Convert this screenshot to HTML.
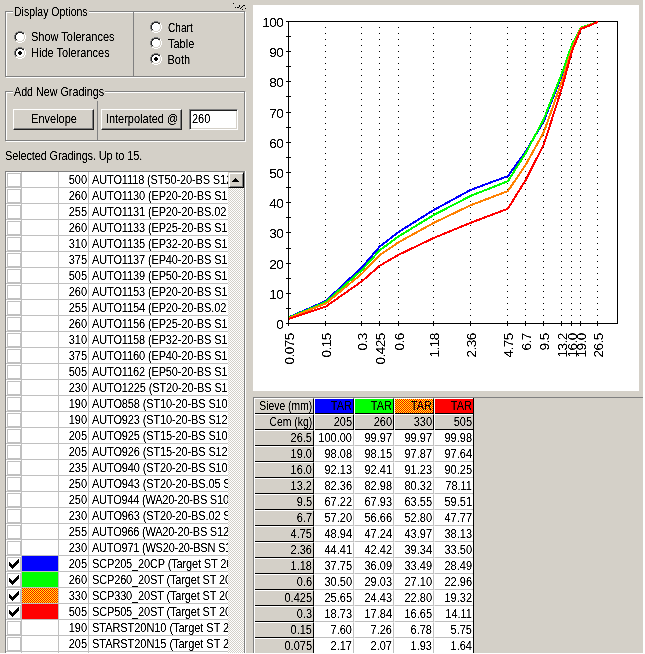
<!DOCTYPE html>
<html lang="en"><head><meta charset="utf-8"><title>Gradings</title>
<style>
*{box-sizing:border-box}
html,body{margin:0;padding:0}
body{width:645px;height:654px;overflow:hidden;background:#d4d0c8;position:relative;
 font-family:"Liberation Sans",sans-serif;font-size:11px;color:#000}
.abs,.t,.gb,.btn,.rad,.ln{position:absolute}
.t{height:14px;line-height:14px;white-space:nowrap;font-size:11px;filter:url(#crisp)}
.t span{display:inline-block;transform:scaleY(1.125);transform-origin:0 11px;line-height:14px;height:14px;vertical-align:top}
.gbw{position:absolute;border:1px solid #fff}
.gbg{position:absolute;border:1px solid #808080}
.lg{position:absolute;background:#d4d0c8;height:14px}
.rad{width:12px;height:12px;border-radius:50%;background:#fff;
 border:1px solid;border-color:#808080 #fff #fff #808080;transform:rotate(0deg)}
.rad:before{content:"";position:absolute;left:0;top:0;width:10px;height:10px;border-radius:50%;
 border:1px solid;border-color:#404040 #d4d0c8 #d4d0c8 #404040}
.rad.on:after{content:"";position:absolute;left:3px;top:3px;width:4px;height:4px;border-radius:50%;background:#000}
.btn{background:#d4d0c8;border:1px solid;border-color:#fff #202020 #202020 #fff;
 box-shadow:inset -1px -1px 0 #808080}
.inp{position:absolute;background:#fff;border:1px solid;border-color:#808080 #fff #fff #808080;
 box-shadow:inset 1px 1px 0 #202020, inset -1px -1px 0 #d4d0c8}
.ln{background:#808080}
#list{position:absolute;left:6px;top:172px;width:222px;height:481px;background:#fff;overflow:hidden}
.row{position:absolute;left:0;width:222px;height:16px;border-bottom:1px solid #c0c0c0}
.row i{position:absolute;left:1px;top:1px;width:14px;height:14px;border:1px solid #c0c0c0}
.row b{position:absolute;left:16px;top:0;width:36px;height:15px;font-weight:normal}
.vl{position:absolute;top:0;width:1px;height:481px;background:#c0c0c0}
.row .t{font-size:11px}
#sb{position:absolute;left:228px;top:172px;width:16px;height:481px;
 background:conic-gradient(#fff 25%,#d4d0c8 0 50%,#fff 0 75%,#d4d0c8 0) 0 0/2px 2px}
#sbu{position:absolute;left:0;top:0;width:16px;height:16px;background:#d4d0c8;
 border:1px solid;border-color:#d4d0c8 #000 #000 #d4d0c8;box-shadow:inset 1px 1px 0 #fff, inset -1px -1px 0 #808080}
#grid{position:absolute;left:254px;top:398px}
.c{position:absolute;height:16px}
.fx{background:#d4d0c8;border:1px solid;border-color:#fff #000 #000 #fff}
.dc{background:#fff;border:1px solid;border-color:#fff #c0c0c0 #c0c0c0 #fff}
.dith{background:conic-gradient(#ff0 25%,#f00 0 50%,#ff0 0 75%,#f00 0) 0 0/2px 2px}
svg{position:absolute;display:block}
</style></head><body>
<svg width="0" height="0" style="left:0;top:0"><defs><filter id="crisp" x="-5%" y="-20%" width="110%" height="140%" color-interpolation-filters="sRGB"><feComponentTransfer><feFuncA type="linear" slope="2.2" intercept="-0.5"/></feComponentTransfer></filter><filter id="crispc" filterUnits="userSpaceOnUse" x="253" y="5" width="386" height="386" color-interpolation-filters="sRGB"><feComponentTransfer><feFuncA type="linear" slope="2.2" intercept="-0.5"/></feComponentTransfer></filter></defs></svg>
<div class="gbw" style="left:6px;top:12px;width:240px;height:66px"></div>
<div class="gbg" style="left:5px;top:11px;width:240px;height:66px"></div>
<div class="ln" style="left:133px;top:11px;width:1px;height:66px"></div>
<div class="lg" style="left:13px;top:5px;width:76px"></div>
<div class="t" style="left:14px;top:5px;"><span style="transform:scale(0.955,1.125);transform-origin:0 11px">Display Options</span></div>
<svg style="left:14px;top:31px" width="12" height="12" viewBox="0 0 12 12" shape-rendering="crispEdges"><path fill="#808080" d="M4 0h4v1h-4zM2 1h2v1h-2zM8 1h2v1h-2zM1 2h1v1h-1zM1 3h1v1h-1zM0 4h1v1h-1zM0 5h1v1h-1zM0 6h1v1h-1zM0 7h1v1h-1zM1 8h1v1h-1zM1 9h1v1h-1z"/><path fill="#202020" d="M4 1h4v1h-4zM2 2h2v1h-2zM8 2h2v1h-2zM2 3h1v1h-1zM1 4h1v1h-1zM1 5h1v1h-1zM1 6h1v1h-1zM1 7h1v1h-1zM2 8h1v1h-1z"/><path fill="#ffffff" d="M4 2h4v1h-4zM3 3h6v1h-6zM2 4h8v1h-8zM2 5h8v1h-8zM2 6h8v1h-8zM2 7h8v1h-8zM3 8h6v1h-6zM4 9h4v1h-4z"/><path fill="#ffffff" d="M10 2h1v1h-1zM10 3h1v1h-1zM11 4h1v1h-1zM11 5h1v1h-1zM11 6h1v1h-1zM11 7h1v1h-1zM10 8h1v1h-1zM10 9h1v1h-1zM2 10h2v1h-2zM8 10h2v1h-2zM4 11h4v1h-4z"/><path fill="#d4d0c8" d="M9 3h1v1h-1zM10 4h1v1h-1zM10 5h1v1h-1zM10 6h1v1h-1zM10 7h1v1h-1zM9 8h1v1h-1zM2 9h2v1h-2zM8 9h2v1h-2zM4 10h4v1h-4z"/></svg>
<div class="t" style="left:31px;top:30px;"><span>Show Tolerances</span></div>
<svg style="left:14px;top:47px" width="12" height="12" viewBox="0 0 12 12" shape-rendering="crispEdges"><path fill="#808080" d="M4 0h4v1h-4zM2 1h2v1h-2zM8 1h2v1h-2zM1 2h1v1h-1zM1 3h1v1h-1zM0 4h1v1h-1zM0 5h1v1h-1zM0 6h1v1h-1zM0 7h1v1h-1zM1 8h1v1h-1zM1 9h1v1h-1z"/><path fill="#202020" d="M4 1h4v1h-4zM2 2h2v1h-2zM8 2h2v1h-2zM2 3h1v1h-1zM1 4h1v1h-1zM1 5h1v1h-1zM1 6h1v1h-1zM1 7h1v1h-1zM2 8h1v1h-1z"/><path fill="#ffffff" d="M4 2h4v1h-4zM3 3h6v1h-6zM2 4h3v1h-3zM7 4h3v1h-3zM2 5h2v1h-2zM8 5h2v1h-2zM2 6h2v1h-2zM8 6h2v1h-2zM2 7h3v1h-3zM7 7h3v1h-3zM3 8h6v1h-6zM4 9h4v1h-4z"/><path fill="#ffffff" d="M10 2h1v1h-1zM10 3h1v1h-1zM11 4h1v1h-1zM11 5h1v1h-1zM11 6h1v1h-1zM11 7h1v1h-1zM10 8h1v1h-1zM10 9h1v1h-1zM2 10h2v1h-2zM8 10h2v1h-2zM4 11h4v1h-4z"/><path fill="#d4d0c8" d="M9 3h1v1h-1zM10 4h1v1h-1zM10 5h1v1h-1zM10 6h1v1h-1zM10 7h1v1h-1zM9 8h1v1h-1zM2 9h2v1h-2zM8 9h2v1h-2zM4 10h4v1h-4z"/><path fill="#000000" d="M5 4h2v1h-2zM4 5h4v1h-4zM4 6h4v1h-4zM5 7h2v1h-2z"/></svg>
<div class="t" style="left:31px;top:46px;"><span>Hide Tolerances</span></div>
<svg style="left:150px;top:21px" width="12" height="12" viewBox="0 0 12 12" shape-rendering="crispEdges"><path fill="#808080" d="M4 0h4v1h-4zM2 1h2v1h-2zM8 1h2v1h-2zM1 2h1v1h-1zM1 3h1v1h-1zM0 4h1v1h-1zM0 5h1v1h-1zM0 6h1v1h-1zM0 7h1v1h-1zM1 8h1v1h-1zM1 9h1v1h-1z"/><path fill="#202020" d="M4 1h4v1h-4zM2 2h2v1h-2zM8 2h2v1h-2zM2 3h1v1h-1zM1 4h1v1h-1zM1 5h1v1h-1zM1 6h1v1h-1zM1 7h1v1h-1zM2 8h1v1h-1z"/><path fill="#ffffff" d="M4 2h4v1h-4zM3 3h6v1h-6zM2 4h8v1h-8zM2 5h8v1h-8zM2 6h8v1h-8zM2 7h8v1h-8zM3 8h6v1h-6zM4 9h4v1h-4z"/><path fill="#ffffff" d="M10 2h1v1h-1zM10 3h1v1h-1zM11 4h1v1h-1zM11 5h1v1h-1zM11 6h1v1h-1zM11 7h1v1h-1zM10 8h1v1h-1zM10 9h1v1h-1zM2 10h2v1h-2zM8 10h2v1h-2zM4 11h4v1h-4z"/><path fill="#d4d0c8" d="M9 3h1v1h-1zM10 4h1v1h-1zM10 5h1v1h-1zM10 6h1v1h-1zM10 7h1v1h-1zM9 8h1v1h-1zM2 9h2v1h-2zM8 9h2v1h-2zM4 10h4v1h-4z"/></svg>
<div class="t" style="left:167.5px;top:21px;"><span style="transform:scale(0.92,1.125);transform-origin:0 11px">Chart</span></div>
<svg style="left:150px;top:37px" width="12" height="12" viewBox="0 0 12 12" shape-rendering="crispEdges"><path fill="#808080" d="M4 0h4v1h-4zM2 1h2v1h-2zM8 1h2v1h-2zM1 2h1v1h-1zM1 3h1v1h-1zM0 4h1v1h-1zM0 5h1v1h-1zM0 6h1v1h-1zM0 7h1v1h-1zM1 8h1v1h-1zM1 9h1v1h-1z"/><path fill="#202020" d="M4 1h4v1h-4zM2 2h2v1h-2zM8 2h2v1h-2zM2 3h1v1h-1zM1 4h1v1h-1zM1 5h1v1h-1zM1 6h1v1h-1zM1 7h1v1h-1zM2 8h1v1h-1z"/><path fill="#ffffff" d="M4 2h4v1h-4zM3 3h6v1h-6zM2 4h8v1h-8zM2 5h8v1h-8zM2 6h8v1h-8zM2 7h8v1h-8zM3 8h6v1h-6zM4 9h4v1h-4z"/><path fill="#ffffff" d="M10 2h1v1h-1zM10 3h1v1h-1zM11 4h1v1h-1zM11 5h1v1h-1zM11 6h1v1h-1zM11 7h1v1h-1zM10 8h1v1h-1zM10 9h1v1h-1zM2 10h2v1h-2zM8 10h2v1h-2zM4 11h4v1h-4z"/><path fill="#d4d0c8" d="M9 3h1v1h-1zM10 4h1v1h-1zM10 5h1v1h-1zM10 6h1v1h-1zM10 7h1v1h-1zM9 8h1v1h-1zM2 9h2v1h-2zM8 9h2v1h-2zM4 10h4v1h-4z"/></svg>
<div class="t" style="left:168px;top:37px;"><span>Table</span></div>
<svg style="left:150px;top:53px" width="12" height="12" viewBox="0 0 12 12" shape-rendering="crispEdges"><path fill="#808080" d="M4 0h4v1h-4zM2 1h2v1h-2zM8 1h2v1h-2zM1 2h1v1h-1zM1 3h1v1h-1zM0 4h1v1h-1zM0 5h1v1h-1zM0 6h1v1h-1zM0 7h1v1h-1zM1 8h1v1h-1zM1 9h1v1h-1z"/><path fill="#202020" d="M4 1h4v1h-4zM2 2h2v1h-2zM8 2h2v1h-2zM2 3h1v1h-1zM1 4h1v1h-1zM1 5h1v1h-1zM1 6h1v1h-1zM1 7h1v1h-1zM2 8h1v1h-1z"/><path fill="#ffffff" d="M4 2h4v1h-4zM3 3h6v1h-6zM2 4h3v1h-3zM7 4h3v1h-3zM2 5h2v1h-2zM8 5h2v1h-2zM2 6h2v1h-2zM8 6h2v1h-2zM2 7h3v1h-3zM7 7h3v1h-3zM3 8h6v1h-6zM4 9h4v1h-4z"/><path fill="#ffffff" d="M10 2h1v1h-1zM10 3h1v1h-1zM11 4h1v1h-1zM11 5h1v1h-1zM11 6h1v1h-1zM11 7h1v1h-1zM10 8h1v1h-1zM10 9h1v1h-1zM2 10h2v1h-2zM8 10h2v1h-2zM4 11h4v1h-4z"/><path fill="#d4d0c8" d="M9 3h1v1h-1zM10 4h1v1h-1zM10 5h1v1h-1zM10 6h1v1h-1zM10 7h1v1h-1zM9 8h1v1h-1zM2 9h2v1h-2zM8 9h2v1h-2zM4 10h4v1h-4z"/><path fill="#000000" d="M5 4h2v1h-2zM4 5h4v1h-4zM4 6h4v1h-4zM5 7h2v1h-2z"/></svg>
<div class="t" style="left:167.5px;top:53px;"><span>Both</span></div>
<svg style="left:232px;top:2px" width="16" height="9" viewBox="232 2 16 9" shape-rendering="crispEdges"><path fill="#000" d="M233 3h1v1h-1zM235 7h1v1h-1zM237 7h2v1h-2zM239 5h1v2h-1zM240 8h1v1h-1zM241 7h1v1h-1zM242 6h1v1h-1zM243 5h2v1h-2zM242 9h1v1h-1zM245 8h1v1h-1z"/></svg>
<div class="gbw" style="left:6px;top:92px;width:240px;height:50px"></div>
<div class="gbg" style="left:5px;top:91px;width:240px;height:50px"></div>
<div class="ln" style="left:97px;top:101px;width:1px;height:40px"></div>
<div class="lg" style="left:13px;top:85px;width:92px"></div>
<div class="t" style="left:14px;top:85px;"><span style="transform:scale(0.975,1.125);transform-origin:0 11px">Add New Gradings</span></div>
<div class="btn" style="left:13px;top:109px;width:81px;height:21px"></div>
<div class="t" style="left:13.5px;top:112px;width:81px;text-align:center;"><span>Envelope</span></div>
<div class="btn" style="left:101px;top:109px;width:81px;height:21px"></div>
<div class="t" style="left:101.5px;top:112px;width:81px;text-align:center;"><span>Interpolated @</span></div>
<div class="inp" style="left:189px;top:109px;width:49px;height:21px"></div>
<div class="t" style="left:192px;top:112px;"><span>260</span></div>
<div class="t" style="left:5px;top:149px;letter-spacing:-0.15px;"><span>Selected Gradings. Up to 15.</span></div>
<div class="ln" style="left:5px;top:171px;width:240px;height:1px"></div>
<div class="ln" style="left:5px;top:171px;width:1px;height:482px"></div>
<div class="ln" style="left:244px;top:171px;width:1px;height:482px"></div>
<div class="abs" style="left:245px;top:171px;width:1px;height:482px;background:#fff"></div>
<div id="list">
<div class="row" style="top:0px"><i></i>
<div class="t" style="left:53px;top:1px;width:28px;text-align:right;"><span>500</span></div>
<div class="t" style="left:86px;top:1px;letter-spacing:-0.13px;"><span>AUTO1118 (ST50-20-BS S12-</span></div>
</div>
<div class="row" style="top:16px"><i></i>
<div class="t" style="left:53px;top:1px;width:28px;text-align:right;"><span>260</span></div>
<div class="t" style="left:86px;top:1px;letter-spacing:-0.13px;"><span>AUTO1130 (EP20-20-BS S10-</span></div>
</div>
<div class="row" style="top:32px"><i></i>
<div class="t" style="left:53px;top:1px;width:28px;text-align:right;"><span>255</span></div>
<div class="t" style="left:86px;top:1px;letter-spacing:-0.13px;"><span>AUTO1131 (EP20-20-BS.02 S</span></div>
</div>
<div class="row" style="top:48px"><i></i>
<div class="t" style="left:53px;top:1px;width:28px;text-align:right;"><span>260</span></div>
<div class="t" style="left:86px;top:1px;letter-spacing:-0.13px;"><span>AUTO1133 (EP25-20-BS S10-</span></div>
</div>
<div class="row" style="top:64px"><i></i>
<div class="t" style="left:53px;top:1px;width:28px;text-align:right;"><span>310</span></div>
<div class="t" style="left:86px;top:1px;letter-spacing:-0.13px;"><span>AUTO1135 (EP32-20-BS S10-</span></div>
</div>
<div class="row" style="top:80px"><i></i>
<div class="t" style="left:53px;top:1px;width:28px;text-align:right;"><span>375</span></div>
<div class="t" style="left:86px;top:1px;letter-spacing:-0.13px;"><span>AUTO1137 (EP40-20-BS S10-</span></div>
</div>
<div class="row" style="top:96px"><i></i>
<div class="t" style="left:53px;top:1px;width:28px;text-align:right;"><span>505</span></div>
<div class="t" style="left:86px;top:1px;letter-spacing:-0.13px;"><span>AUTO1139 (EP50-20-BS S10-</span></div>
</div>
<div class="row" style="top:112px"><i></i>
<div class="t" style="left:53px;top:1px;width:28px;text-align:right;"><span>260</span></div>
<div class="t" style="left:86px;top:1px;letter-spacing:-0.13px;"><span>AUTO1153 (EP20-20-BS S12-</span></div>
</div>
<div class="row" style="top:128px"><i></i>
<div class="t" style="left:53px;top:1px;width:28px;text-align:right;"><span>255</span></div>
<div class="t" style="left:86px;top:1px;letter-spacing:-0.13px;"><span>AUTO1154 (EP20-20-BS.02 S</span></div>
</div>
<div class="row" style="top:144px"><i></i>
<div class="t" style="left:53px;top:1px;width:28px;text-align:right;"><span>260</span></div>
<div class="t" style="left:86px;top:1px;letter-spacing:-0.13px;"><span>AUTO1156 (EP25-20-BS S12-</span></div>
</div>
<div class="row" style="top:160px"><i></i>
<div class="t" style="left:53px;top:1px;width:28px;text-align:right;"><span>310</span></div>
<div class="t" style="left:86px;top:1px;letter-spacing:-0.13px;"><span>AUTO1158 (EP32-20-BS S12-</span></div>
</div>
<div class="row" style="top:176px"><i></i>
<div class="t" style="left:53px;top:1px;width:28px;text-align:right;"><span>375</span></div>
<div class="t" style="left:86px;top:1px;letter-spacing:-0.13px;"><span>AUTO1160 (EP40-20-BS S12-</span></div>
</div>
<div class="row" style="top:192px"><i></i>
<div class="t" style="left:53px;top:1px;width:28px;text-align:right;"><span>505</span></div>
<div class="t" style="left:86px;top:1px;letter-spacing:-0.13px;"><span>AUTO1162 (EP50-20-BS S12-</span></div>
</div>
<div class="row" style="top:208px"><i></i>
<div class="t" style="left:53px;top:1px;width:28px;text-align:right;"><span>230</span></div>
<div class="t" style="left:86px;top:1px;letter-spacing:-0.13px;"><span>AUTO1225 (ST20-20-BS S12-</span></div>
</div>
<div class="row" style="top:224px"><i></i>
<div class="t" style="left:53px;top:1px;width:28px;text-align:right;"><span>190</span></div>
<div class="t" style="left:86px;top:1px;letter-spacing:-0.13px;"><span>AUTO858 (ST10-20-BS S10-</span></div>
</div>
<div class="row" style="top:240px"><i></i>
<div class="t" style="left:53px;top:1px;width:28px;text-align:right;"><span>190</span></div>
<div class="t" style="left:86px;top:1px;letter-spacing:-0.13px;"><span>AUTO923 (ST10-20-BS S12-</span></div>
</div>
<div class="row" style="top:256px"><i></i>
<div class="t" style="left:53px;top:1px;width:28px;text-align:right;"><span>205</span></div>
<div class="t" style="left:86px;top:1px;letter-spacing:-0.13px;"><span>AUTO925 (ST15-20-BS S10-</span></div>
</div>
<div class="row" style="top:272px"><i></i>
<div class="t" style="left:53px;top:1px;width:28px;text-align:right;"><span>205</span></div>
<div class="t" style="left:86px;top:1px;letter-spacing:-0.13px;"><span>AUTO926 (ST15-20-BS S12-</span></div>
</div>
<div class="row" style="top:288px"><i></i>
<div class="t" style="left:53px;top:1px;width:28px;text-align:right;"><span>235</span></div>
<div class="t" style="left:86px;top:1px;letter-spacing:-0.13px;"><span>AUTO940 (ST20-20-BS S10-</span></div>
</div>
<div class="row" style="top:304px"><i></i>
<div class="t" style="left:53px;top:1px;width:28px;text-align:right;"><span>250</span></div>
<div class="t" style="left:86px;top:1px;letter-spacing:-0.13px;"><span>AUTO943 (ST20-20-BS.05 S</span></div>
</div>
<div class="row" style="top:320px"><i></i>
<div class="t" style="left:53px;top:1px;width:28px;text-align:right;"><span>250</span></div>
<div class="t" style="left:86px;top:1px;letter-spacing:-0.22px;"><span>AUTO944 (WA20-20-BS S10</span></div>
</div>
<div class="row" style="top:336px"><i></i>
<div class="t" style="left:53px;top:1px;width:28px;text-align:right;"><span>230</span></div>
<div class="t" style="left:86px;top:1px;letter-spacing:-0.13px;"><span>AUTO963 (ST20-20-BS.02 S</span></div>
</div>
<div class="row" style="top:352px"><i></i>
<div class="t" style="left:53px;top:1px;width:28px;text-align:right;"><span>255</span></div>
<div class="t" style="left:86px;top:1px;letter-spacing:-0.22px;"><span>AUTO966 (WA20-20-BS S12</span></div>
</div>
<div class="row" style="top:368px"><i></i>
<div class="t" style="left:53px;top:1px;width:28px;text-align:right;"><span>230</span></div>
<div class="t" style="left:86px;top:1px;letter-spacing:-0.22px;"><span>AUTO971 (WS20-20-BSN S1</span></div>
</div>
<div class="row" style="top:384px"><i></i>
<b style="background:#00f"></b>
<svg style="left:3px;top:3px" width="10" height="10" viewBox="0 0 10 10" shape-rendering="crispEdges"><path fill="#000" d="M9 0h1v1h-1zM8 1h2v1h-2zM7 2h3v1h-3zM0 3h1v1h-1zM6 3h4v1h-4zM0 4h2v1h-2zM5 4h4v1h-4zM0 5h3v1h-3zM4 5h4v1h-4zM0 6h7v1h-7zM1 7h5v1h-5zM2 8h3v1h-3zM3 9h1v1h-1z"/></svg>
<div class="t" style="left:53px;top:1px;width:28px;text-align:right;"><span>205</span></div>
<div class="t" style="left:86px;top:1px;letter-spacing:-0.15px;"><span>SCP205_20CP (Target ST 20</span></div>
</div>
<div class="row" style="top:400px"><i></i>
<b style="background:#0f0"></b>
<svg style="left:3px;top:3px" width="10" height="10" viewBox="0 0 10 10" shape-rendering="crispEdges"><path fill="#000" d="M9 0h1v1h-1zM8 1h2v1h-2zM7 2h3v1h-3zM0 3h1v1h-1zM6 3h4v1h-4zM0 4h2v1h-2zM5 4h4v1h-4zM0 5h3v1h-3zM4 5h4v1h-4zM0 6h7v1h-7zM1 7h5v1h-5zM2 8h3v1h-3zM3 9h1v1h-1z"/></svg>
<div class="t" style="left:53px;top:1px;width:28px;text-align:right;"><span>260</span></div>
<div class="t" style="left:86px;top:1px;letter-spacing:-0.15px;"><span>SCP260_20ST (Target ST 20</span></div>
</div>
<div class="row" style="top:416px"><i></i>
<b class="dith" style=""></b>
<svg style="left:3px;top:3px" width="10" height="10" viewBox="0 0 10 10" shape-rendering="crispEdges"><path fill="#000" d="M9 0h1v1h-1zM8 1h2v1h-2zM7 2h3v1h-3zM0 3h1v1h-1zM6 3h4v1h-4zM0 4h2v1h-2zM5 4h4v1h-4zM0 5h3v1h-3zM4 5h4v1h-4zM0 6h7v1h-7zM1 7h5v1h-5zM2 8h3v1h-3zM3 9h1v1h-1z"/></svg>
<div class="t" style="left:53px;top:1px;width:28px;text-align:right;"><span>330</span></div>
<div class="t" style="left:86px;top:1px;letter-spacing:-0.15px;"><span>SCP330_20ST (Target ST 20</span></div>
</div>
<div class="row" style="top:432px"><i></i>
<b style="background:#f00"></b>
<svg style="left:3px;top:3px" width="10" height="10" viewBox="0 0 10 10" shape-rendering="crispEdges"><path fill="#000" d="M9 0h1v1h-1zM8 1h2v1h-2zM7 2h3v1h-3zM0 3h1v1h-1zM6 3h4v1h-4zM0 4h2v1h-2zM5 4h4v1h-4zM0 5h3v1h-3zM4 5h4v1h-4zM0 6h7v1h-7zM1 7h5v1h-5zM2 8h3v1h-3zM3 9h1v1h-1z"/></svg>
<div class="t" style="left:53px;top:1px;width:28px;text-align:right;"><span>505</span></div>
<div class="t" style="left:86px;top:1px;letter-spacing:-0.15px;"><span>SCP505_20ST (Target ST 20</span></div>
</div>
<div class="row" style="top:448px"><i></i>
<div class="t" style="left:53px;top:1px;width:28px;text-align:right;"><span>190</span></div>
<div class="t" style="left:86px;top:1px;letter-spacing:-0.05px;"><span>STARST20N10 (Target ST 2</span></div>
</div>
<div class="row" style="top:464px"><i></i>
<div class="t" style="left:53px;top:1px;width:28px;text-align:right;"><span>205</span></div>
<div class="t" style="left:86px;top:1px;letter-spacing:-0.05px;"><span>STARST20N15 (Target ST 2</span></div>
</div>
<div class="row" style="top:480px"><i></i>
</div>
<div class="vl" style="left:15px"></div>
<div class="vl" style="left:52px"></div>
<div class="vl" style="left:82px"></div>
</div>
<div id="sb"><div id="sbu"><svg style="left:3px;top:5px" width="7" height="4" viewBox="0 0 7 4" shape-rendering="crispEdges"><path d="M3 0h1v1h1v1h1v1h1v1h-7v-1h1v-1h1v-1h1z" fill="#000"/></svg></div></div>
<div class="abs" style="left:253px;top:5px;width:386px;height:386px;background:#fff"></div>
<svg style="left:253px;top:5px" width="386" height="386" viewBox="253 5 386 386" font-family="Liberation Sans, sans-serif" font-size="13.6" letter-spacing="-0.6"><g shape-rendering="crispEdges" fill="#000"><path d="M325.5 27V321" stroke="#000" stroke-width="1" stroke-dasharray="1 5" fill="none"/><path d="M361.5 27V321" stroke="#000" stroke-width="1" stroke-dasharray="1 5" fill="none"/><path d="M379.5 27V321" stroke="#000" stroke-width="1" stroke-dasharray="1 5" fill="none"/><path d="M398.5 27V321" stroke="#000" stroke-width="1" stroke-dasharray="1 5" fill="none"/><path d="M433.5 27V321" stroke="#000" stroke-width="1" stroke-dasharray="1 5" fill="none"/><path d="M470.5 27V321" stroke="#000" stroke-width="1" stroke-dasharray="1 5" fill="none"/><path d="M507.5 27V321" stroke="#000" stroke-width="1" stroke-dasharray="1 5" fill="none"/><path d="M525.5 27V321" stroke="#000" stroke-width="1" stroke-dasharray="1 5" fill="none"/><path d="M543.5 27V321" stroke="#000" stroke-width="1" stroke-dasharray="1 5" fill="none"/><path d="M561.5 27V321" stroke="#000" stroke-width="1" stroke-dasharray="1 5" fill="none"/><path d="M571.5 27V321" stroke="#000" stroke-width="1" stroke-dasharray="1 5" fill="none"/><path d="M580.5 27V321" stroke="#000" stroke-width="1" stroke-dasharray="1 5" fill="none"/><path d="M597.5 27V321" stroke="#000" stroke-width="1" stroke-dasharray="1 5" fill="none"/><rect x="288" y="21" width="330" height="1"/><rect x="288" y="323" width="330" height="1"/><rect x="288" y="21" width="1" height="303"/><rect x="617" y="21" width="1" height="303"/><rect x="286" y="323" width="5" height="1"/><rect x="286" y="308" width="5" height="1"/><rect x="286" y="293" width="5" height="1"/><rect x="286" y="278" width="5" height="1"/><rect x="286" y="263" width="5" height="1"/><rect x="286" y="248" width="5" height="1"/><rect x="286" y="232" width="5" height="1"/><rect x="286" y="217" width="5" height="1"/><rect x="286" y="202" width="5" height="1"/><rect x="286" y="187" width="5" height="1"/><rect x="286" y="172" width="5" height="1"/><rect x="286" y="157" width="5" height="1"/><rect x="286" y="142" width="5" height="1"/><rect x="286" y="127" width="5" height="1"/><rect x="286" y="112" width="5" height="1"/><rect x="286" y="96" width="5" height="1"/><rect x="286" y="81" width="5" height="1"/><rect x="286" y="66" width="5" height="1"/><rect x="286" y="51" width="5" height="1"/><rect x="286" y="36" width="5" height="1"/><rect x="286" y="21" width="5" height="1"/><rect x="288" y="321" width="1" height="5"/><rect x="325" y="321" width="1" height="5"/><rect x="361" y="321" width="1" height="5"/><rect x="379" y="321" width="1" height="5"/><rect x="398" y="321" width="1" height="5"/><rect x="433" y="321" width="1" height="5"/><rect x="470" y="321" width="1" height="5"/><rect x="507" y="321" width="1" height="5"/><rect x="525" y="321" width="1" height="5"/><rect x="543" y="321" width="1" height="5"/><rect x="561" y="321" width="1" height="5"/><rect x="571" y="321" width="1" height="5"/><rect x="580" y="321" width="1" height="5"/><rect x="597" y="321" width="1" height="5"/></g><g fill="none" stroke-width="2" stroke-linejoin="round" shape-rendering="crispEdges" transform="translate(0.9 0.9)"><polyline stroke="#0000ff" points="288.0,316.4 325.0,300.0 361.0,266.4 379.0,245.5 398.0,230.9 433.0,209.0 470.0,188.9 507.0,175.2 525.0,150.3 543.0,120.0 561.0,74.3 571.0,44.8 580.0,26.8 597.0,21.0"/><polyline stroke="#00ff00" points="288.0,316.7 325.0,301.1 361.0,269.1 379.0,249.2 398.0,235.3 433.0,214.0 470.0,194.9 507.0,180.3 525.0,151.9 543.0,117.9 561.0,72.4 571.0,43.9 580.0,26.6 597.0,21.1"/><polyline stroke="#ff8000" points="288.0,317.2 325.0,302.5 361.0,272.7 379.0,254.1 398.0,241.2 433.0,221.9 470.0,204.2 507.0,190.2 525.0,163.5 543.0,131.1 561.0,80.4 571.0,47.5 580.0,27.4 597.0,21.1"/><polyline stroke="#ff0000" points="288.0,318.0 325.0,305.6 361.0,280.4 379.0,264.7 398.0,253.7 433.0,237.0 470.0,221.8 507.0,207.8 525.0,178.7 543.0,143.3 561.0,87.1 571.0,50.4 580.0,28.1 597.0,21.1"/></g><g text-anchor="end" fill="#000" filter="url(#crispc)"><text x="283.2" y="329">0</text><text x="283.2" y="299">10</text><text x="283.2" y="269">20</text><text x="283.2" y="238">30</text><text x="283.2" y="208">40</text><text x="283.2" y="178">50</text><text x="283.2" y="148">60</text><text x="283.2" y="118">70</text><text x="283.2" y="87">80</text><text x="283.2" y="57">90</text><text x="283.2" y="27">100</text><text transform="translate(294 333.4) rotate(-90)">0.075</text><text transform="translate(331 333.4) rotate(-90)">0.15</text><text transform="translate(367 333.4) rotate(-90)">0.3</text><text transform="translate(385 333.4) rotate(-90)">0.425</text><text transform="translate(404 333.4) rotate(-90)">0.6</text><text transform="translate(439 333.4) rotate(-90)">1.18</text><text transform="translate(476 333.4) rotate(-90)">2.36</text><text transform="translate(513 333.4) rotate(-90)">4.75</text><text transform="translate(531 333.4) rotate(-90)">6.7</text><text transform="translate(549 333.4) rotate(-90)">9.5</text><text transform="translate(567 333.4) rotate(-90)">13.2</text><text transform="translate(577 333.4) rotate(-90)">16.0</text><text transform="translate(586 333.4) rotate(-90)">19.0</text><text transform="translate(603 333.4) rotate(-90)">26.5</text></g></svg>
<div class="ln" style="left:253px;top:397px;width:390px;height:1px"></div>
<div class="ln" style="left:253px;top:397px;width:1px;height:256px"></div>
<div class="c fx" style="left:254px;top:398px;width:60px;"></div>
<div class="t" style="left:254px;top:399px;width:58px;text-align:right;"><span style="transform:scale(0.94,1.125);transform-origin:100% 11px">Sieve (mm)</span></div>
<div class="c fx" style="left:314px;top:398px;width:40px;background:#0000ff;"></div>
<div class="t" style="left:314px;top:399px;width:38px;text-align:right;"><span>TAR</span></div>
<div class="c fx" style="left:354px;top:398px;width:40px;background:#00ff00;"></div>
<div class="t" style="left:354px;top:399px;width:38px;text-align:right;"><span>TAR</span></div>
<div class="c fx dith" style="left:394px;top:398px;width:40px;"></div>
<div class="t" style="left:394px;top:399px;width:38px;text-align:right;"><span>TAR</span></div>
<div class="c fx" style="left:434px;top:398px;width:40px;background:#ff0000;"></div>
<div class="t" style="left:434px;top:399px;width:38px;text-align:right;"><span>TAR</span></div>
<div class="c fx" style="left:254px;top:414px;width:60px;"></div>
<div class="t" style="left:254px;top:415px;width:58px;text-align:right;"><span style="transform:scale(0.945,1.125);transform-origin:100% 11px">Cem (kg)</span></div>
<div class="c fx" style="left:314px;top:414px;width:40px;"></div>
<div class="t" style="left:314px;top:415px;width:38px;text-align:right;"><span>205</span></div>
<div class="c fx" style="left:354px;top:414px;width:40px;"></div>
<div class="t" style="left:354px;top:415px;width:38px;text-align:right;"><span>260</span></div>
<div class="c fx" style="left:394px;top:414px;width:40px;"></div>
<div class="t" style="left:394px;top:415px;width:38px;text-align:right;"><span>330</span></div>
<div class="c fx" style="left:434px;top:414px;width:40px;"></div>
<div class="t" style="left:434px;top:415px;width:38px;text-align:right;"><span>505</span></div>
<div class="c fx" style="left:254px;top:430px;width:60px;"></div>
<div class="t" style="left:254px;top:431px;width:58px;text-align:right;"><span>26.5</span></div>
<div class="c dc" style="left:314px;top:430px;width:40px;"></div>
<div class="t" style="left:314px;top:431px;width:38px;text-align:right;"><span>100.00</span></div>
<div class="c dc" style="left:354px;top:430px;width:40px;"></div>
<div class="t" style="left:354px;top:431px;width:38px;text-align:right;"><span>99.97</span></div>
<div class="c dc" style="left:394px;top:430px;width:40px;"></div>
<div class="t" style="left:394px;top:431px;width:38px;text-align:right;"><span>99.97</span></div>
<div class="c dc" style="left:434px;top:430px;width:40px;"></div>
<div class="t" style="left:434px;top:431px;width:38px;text-align:right;"><span>99.98</span></div>
<div class="c fx" style="left:254px;top:446px;width:60px;"></div>
<div class="t" style="left:254px;top:447px;width:58px;text-align:right;"><span>19.0</span></div>
<div class="c dc" style="left:314px;top:446px;width:40px;"></div>
<div class="t" style="left:314px;top:447px;width:38px;text-align:right;"><span>98.08</span></div>
<div class="c dc" style="left:354px;top:446px;width:40px;"></div>
<div class="t" style="left:354px;top:447px;width:38px;text-align:right;"><span>98.15</span></div>
<div class="c dc" style="left:394px;top:446px;width:40px;"></div>
<div class="t" style="left:394px;top:447px;width:38px;text-align:right;"><span>97.87</span></div>
<div class="c dc" style="left:434px;top:446px;width:40px;"></div>
<div class="t" style="left:434px;top:447px;width:38px;text-align:right;"><span>97.64</span></div>
<div class="c fx" style="left:254px;top:462px;width:60px;"></div>
<div class="t" style="left:254px;top:463px;width:58px;text-align:right;"><span>16.0</span></div>
<div class="c dc" style="left:314px;top:462px;width:40px;"></div>
<div class="t" style="left:314px;top:463px;width:38px;text-align:right;"><span>92.13</span></div>
<div class="c dc" style="left:354px;top:462px;width:40px;"></div>
<div class="t" style="left:354px;top:463px;width:38px;text-align:right;"><span>92.41</span></div>
<div class="c dc" style="left:394px;top:462px;width:40px;"></div>
<div class="t" style="left:394px;top:463px;width:38px;text-align:right;"><span>91.23</span></div>
<div class="c dc" style="left:434px;top:462px;width:40px;"></div>
<div class="t" style="left:434px;top:463px;width:38px;text-align:right;"><span>90.25</span></div>
<div class="c fx" style="left:254px;top:478px;width:60px;"></div>
<div class="t" style="left:254px;top:479px;width:58px;text-align:right;"><span>13.2</span></div>
<div class="c dc" style="left:314px;top:478px;width:40px;"></div>
<div class="t" style="left:314px;top:479px;width:38px;text-align:right;"><span>82.36</span></div>
<div class="c dc" style="left:354px;top:478px;width:40px;"></div>
<div class="t" style="left:354px;top:479px;width:38px;text-align:right;"><span>82.98</span></div>
<div class="c dc" style="left:394px;top:478px;width:40px;"></div>
<div class="t" style="left:394px;top:479px;width:38px;text-align:right;"><span>80.32</span></div>
<div class="c dc" style="left:434px;top:478px;width:40px;"></div>
<div class="t" style="left:434px;top:479px;width:38px;text-align:right;"><span>78.11</span></div>
<div class="c fx" style="left:254px;top:494px;width:60px;"></div>
<div class="t" style="left:254px;top:495px;width:58px;text-align:right;"><span>9.5</span></div>
<div class="c dc" style="left:314px;top:494px;width:40px;"></div>
<div class="t" style="left:314px;top:495px;width:38px;text-align:right;"><span>67.22</span></div>
<div class="c dc" style="left:354px;top:494px;width:40px;"></div>
<div class="t" style="left:354px;top:495px;width:38px;text-align:right;"><span>67.93</span></div>
<div class="c dc" style="left:394px;top:494px;width:40px;"></div>
<div class="t" style="left:394px;top:495px;width:38px;text-align:right;"><span>63.55</span></div>
<div class="c dc" style="left:434px;top:494px;width:40px;"></div>
<div class="t" style="left:434px;top:495px;width:38px;text-align:right;"><span>59.51</span></div>
<div class="c fx" style="left:254px;top:510px;width:60px;"></div>
<div class="t" style="left:254px;top:511px;width:58px;text-align:right;"><span>6.7</span></div>
<div class="c dc" style="left:314px;top:510px;width:40px;"></div>
<div class="t" style="left:314px;top:511px;width:38px;text-align:right;"><span>57.20</span></div>
<div class="c dc" style="left:354px;top:510px;width:40px;"></div>
<div class="t" style="left:354px;top:511px;width:38px;text-align:right;"><span>56.66</span></div>
<div class="c dc" style="left:394px;top:510px;width:40px;"></div>
<div class="t" style="left:394px;top:511px;width:38px;text-align:right;"><span>52.80</span></div>
<div class="c dc" style="left:434px;top:510px;width:40px;"></div>
<div class="t" style="left:434px;top:511px;width:38px;text-align:right;"><span>47.77</span></div>
<div class="c fx" style="left:254px;top:526px;width:60px;"></div>
<div class="t" style="left:254px;top:527px;width:58px;text-align:right;"><span>4.75</span></div>
<div class="c dc" style="left:314px;top:526px;width:40px;"></div>
<div class="t" style="left:314px;top:527px;width:38px;text-align:right;"><span>48.94</span></div>
<div class="c dc" style="left:354px;top:526px;width:40px;"></div>
<div class="t" style="left:354px;top:527px;width:38px;text-align:right;"><span>47.24</span></div>
<div class="c dc" style="left:394px;top:526px;width:40px;"></div>
<div class="t" style="left:394px;top:527px;width:38px;text-align:right;"><span>43.97</span></div>
<div class="c dc" style="left:434px;top:526px;width:40px;"></div>
<div class="t" style="left:434px;top:527px;width:38px;text-align:right;"><span>38.13</span></div>
<div class="c fx" style="left:254px;top:542px;width:60px;"></div>
<div class="t" style="left:254px;top:543px;width:58px;text-align:right;"><span>2.36</span></div>
<div class="c dc" style="left:314px;top:542px;width:40px;"></div>
<div class="t" style="left:314px;top:543px;width:38px;text-align:right;"><span>44.41</span></div>
<div class="c dc" style="left:354px;top:542px;width:40px;"></div>
<div class="t" style="left:354px;top:543px;width:38px;text-align:right;"><span>42.42</span></div>
<div class="c dc" style="left:394px;top:542px;width:40px;"></div>
<div class="t" style="left:394px;top:543px;width:38px;text-align:right;"><span>39.34</span></div>
<div class="c dc" style="left:434px;top:542px;width:40px;"></div>
<div class="t" style="left:434px;top:543px;width:38px;text-align:right;"><span>33.50</span></div>
<div class="c fx" style="left:254px;top:558px;width:60px;"></div>
<div class="t" style="left:254px;top:559px;width:58px;text-align:right;"><span>1.18</span></div>
<div class="c dc" style="left:314px;top:558px;width:40px;"></div>
<div class="t" style="left:314px;top:559px;width:38px;text-align:right;"><span>37.75</span></div>
<div class="c dc" style="left:354px;top:558px;width:40px;"></div>
<div class="t" style="left:354px;top:559px;width:38px;text-align:right;"><span>36.09</span></div>
<div class="c dc" style="left:394px;top:558px;width:40px;"></div>
<div class="t" style="left:394px;top:559px;width:38px;text-align:right;"><span>33.49</span></div>
<div class="c dc" style="left:434px;top:558px;width:40px;"></div>
<div class="t" style="left:434px;top:559px;width:38px;text-align:right;"><span>28.49</span></div>
<div class="c fx" style="left:254px;top:574px;width:60px;"></div>
<div class="t" style="left:254px;top:575px;width:58px;text-align:right;"><span>0.6</span></div>
<div class="c dc" style="left:314px;top:574px;width:40px;"></div>
<div class="t" style="left:314px;top:575px;width:38px;text-align:right;"><span>30.50</span></div>
<div class="c dc" style="left:354px;top:574px;width:40px;"></div>
<div class="t" style="left:354px;top:575px;width:38px;text-align:right;"><span>29.03</span></div>
<div class="c dc" style="left:394px;top:574px;width:40px;"></div>
<div class="t" style="left:394px;top:575px;width:38px;text-align:right;"><span>27.10</span></div>
<div class="c dc" style="left:434px;top:574px;width:40px;"></div>
<div class="t" style="left:434px;top:575px;width:38px;text-align:right;"><span>22.96</span></div>
<div class="c fx" style="left:254px;top:590px;width:60px;"></div>
<div class="t" style="left:254px;top:591px;width:58px;text-align:right;"><span>0.425</span></div>
<div class="c dc" style="left:314px;top:590px;width:40px;"></div>
<div class="t" style="left:314px;top:591px;width:38px;text-align:right;"><span>25.65</span></div>
<div class="c dc" style="left:354px;top:590px;width:40px;"></div>
<div class="t" style="left:354px;top:591px;width:38px;text-align:right;"><span>24.43</span></div>
<div class="c dc" style="left:394px;top:590px;width:40px;"></div>
<div class="t" style="left:394px;top:591px;width:38px;text-align:right;"><span>22.80</span></div>
<div class="c dc" style="left:434px;top:590px;width:40px;"></div>
<div class="t" style="left:434px;top:591px;width:38px;text-align:right;"><span>19.32</span></div>
<div class="c fx" style="left:254px;top:606px;width:60px;"></div>
<div class="t" style="left:254px;top:607px;width:58px;text-align:right;"><span>0.3</span></div>
<div class="c dc" style="left:314px;top:606px;width:40px;"></div>
<div class="t" style="left:314px;top:607px;width:38px;text-align:right;"><span>18.73</span></div>
<div class="c dc" style="left:354px;top:606px;width:40px;"></div>
<div class="t" style="left:354px;top:607px;width:38px;text-align:right;"><span>17.84</span></div>
<div class="c dc" style="left:394px;top:606px;width:40px;"></div>
<div class="t" style="left:394px;top:607px;width:38px;text-align:right;"><span>16.65</span></div>
<div class="c dc" style="left:434px;top:606px;width:40px;"></div>
<div class="t" style="left:434px;top:607px;width:38px;text-align:right;"><span>14.11</span></div>
<div class="c fx" style="left:254px;top:622px;width:60px;"></div>
<div class="t" style="left:254px;top:623px;width:58px;text-align:right;"><span>0.15</span></div>
<div class="c dc" style="left:314px;top:622px;width:40px;"></div>
<div class="t" style="left:314px;top:623px;width:38px;text-align:right;"><span>7.60</span></div>
<div class="c dc" style="left:354px;top:622px;width:40px;"></div>
<div class="t" style="left:354px;top:623px;width:38px;text-align:right;"><span>7.26</span></div>
<div class="c dc" style="left:394px;top:622px;width:40px;"></div>
<div class="t" style="left:394px;top:623px;width:38px;text-align:right;"><span>6.78</span></div>
<div class="c dc" style="left:434px;top:622px;width:40px;"></div>
<div class="t" style="left:434px;top:623px;width:38px;text-align:right;"><span>5.75</span></div>
<div class="c fx" style="left:254px;top:638px;width:60px;"></div>
<div class="t" style="left:254px;top:639px;width:58px;text-align:right;"><span>0.075</span></div>
<div class="c dc" style="left:314px;top:638px;width:40px;"></div>
<div class="t" style="left:314px;top:639px;width:38px;text-align:right;"><span>2.17</span></div>
<div class="c dc" style="left:354px;top:638px;width:40px;"></div>
<div class="t" style="left:354px;top:639px;width:38px;text-align:right;"><span>2.07</span></div>
<div class="c dc" style="left:394px;top:638px;width:40px;"></div>
<div class="t" style="left:394px;top:639px;width:38px;text-align:right;"><span>1.93</span></div>
<div class="c dc" style="left:434px;top:638px;width:40px;"></div>
<div class="t" style="left:434px;top:639px;width:38px;text-align:right;"><span>1.64</span></div>
<div class="abs" style="left:473px;top:398px;width:1px;height:255px;background:#000"></div>
<div class="abs" style="left:254px;top:398px;width:1px;height:256px;background:#fff"></div>
<div class="abs" style="left:314px;top:398px;width:1px;height:32px;background:#fff"></div>
<div class="abs" style="left:354px;top:398px;width:1px;height:32px;background:#fff"></div>
<div class="abs" style="left:394px;top:398px;width:1px;height:32px;background:#fff"></div>
<div class="abs" style="left:434px;top:398px;width:1px;height:32px;background:#fff"></div>
<div class="abs" style="left:643px;top:0;width:2px;height:654px;background:#fff"></div>
<div class="abs" style="left:0;top:653px;width:645px;height:1px;background:#fff"></div>
</body></html>
